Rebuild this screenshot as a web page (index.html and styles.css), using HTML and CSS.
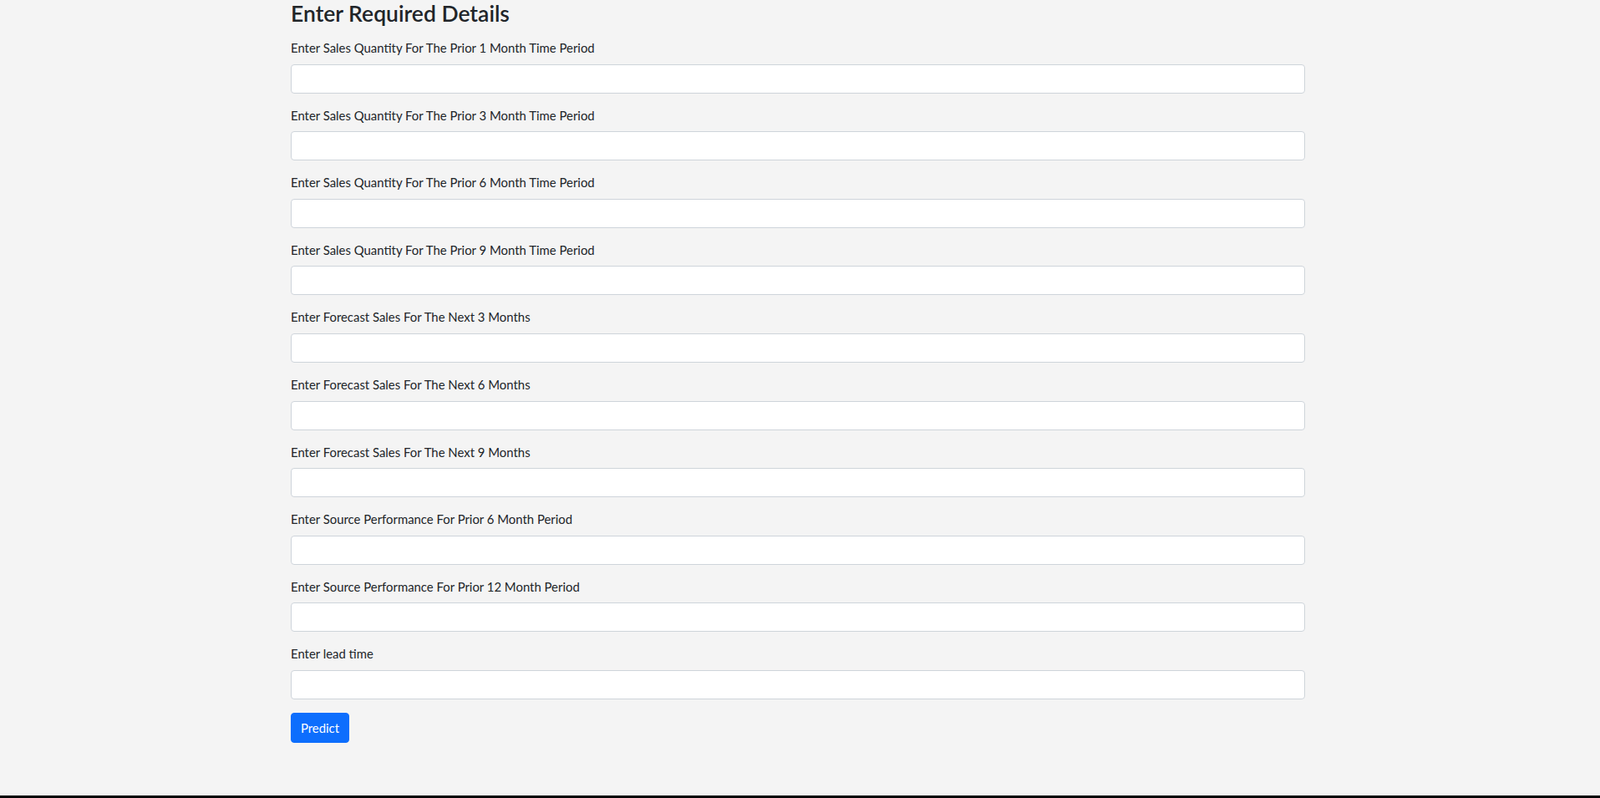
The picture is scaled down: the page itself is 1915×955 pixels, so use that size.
FILE: index.html
```html
<!DOCTYPE html>
<html lang="en">
<head>
<meta charset="utf-8">
<title>Enter Required Details</title>
<link rel="stylesheet" href="styles.css">
</head>
<body>
<div class="page">
  <main class="container">
    <h3 class="title">Enter Required Details</h3>
    <form class="form">
      <div class="group">
        <label class="label" for="f1">Enter Sales Quantity For The Prior 1 Month Time Period</label>
        <input class="input" id="f1" type="text">
      </div>
      <div class="group">
        <label class="label" for="f2">Enter Sales Quantity For The Prior 3 Month Time Period</label>
        <input class="input" id="f2" type="text">
      </div>
      <div class="group">
        <label class="label" for="f3">Enter Sales Quantity For The Prior 6 Month Time Period</label>
        <input class="input" id="f3" type="text">
      </div>
      <div class="group">
        <label class="label" for="f4">Enter Sales Quantity For The Prior 9 Month Time Period</label>
        <input class="input" id="f4" type="text">
      </div>
      <div class="group">
        <label class="label" for="f5">Enter Forecast Sales For The Next 3 Months</label>
        <input class="input" id="f5" type="text">
      </div>
      <div class="group">
        <label class="label" for="f6">Enter Forecast Sales For The Next 6 Months</label>
        <input class="input" id="f6" type="text">
      </div>
      <div class="group">
        <label class="label" for="f7">Enter Forecast Sales For The Next 9 Months</label>
        <input class="input" id="f7" type="text">
      </div>
      <div class="group">
        <label class="label" for="f8">Enter Source Performance For Prior 6 Month Period</label>
        <input class="input" id="f8" type="text">
      </div>
      <div class="group">
        <label class="label" for="f9">Enter Source Performance For Prior 12 Month Period</label>
        <input class="input" id="f9" type="text">
      </div>
      <div class="group">
        <label class="label" for="f10">Enter lead time</label>
        <input class="input" id="f10" type="text">
      </div>
      <button class="btn" type="button">Predict</button>
    </form>
  </main>
  <div class="footer-line"></div>
</div>
</body>
</html>
```

FILE: styles.css
```css
html, body {
  margin: 0;
  padding: 0;
  height: 100%;
}
body {
  background: #f4f4f4;
  color: #212529;
  font-family: Lato, "Noto Sans", "Liberation Sans", sans-serif;
}
.page {
  display: flex;
  flex-direction: column;
  height: 100vh;
}
.container {
  flex: 1;
  width: 1214px;
  margin-left: 348px;
}
.title {
  margin: 0 0 16px;
  padding-top: 1px;
  font-size: 26.5px;
  line-height: 30px;
  font-weight: 600;
}
.form {
  display: flex;
  flex-direction: column;
  align-items: flex-start;
}
.group {
  width: 100%;
  margin-bottom: 16px;
}
.label {
  display: block;
  font-size: 14.9px;
  line-height: 21.6px;
  margin-bottom: 8px;
}
.input {
  display: block;
  box-sizing: border-box;
  width: 100%;
  height: 35px;
  margin: 0;
  padding: 5px 11px;
  border: 1px solid #ced4da;
  border-radius: 4px;
  background: #fff;
  font: inherit;
  font-size: 14.9px;
}
.btn {
  box-sizing: border-box;
  width: 70px;
  height: 36px;
  padding: 0;
  border: 1px solid #0d6efd;
  border-radius: 4px;
  background: #0d6efd;
  color: #fff;
  font-family: inherit;
  font-size: 14.9px;
}
.footer-line {
  height: 3px;
  background: #000;
}
```
